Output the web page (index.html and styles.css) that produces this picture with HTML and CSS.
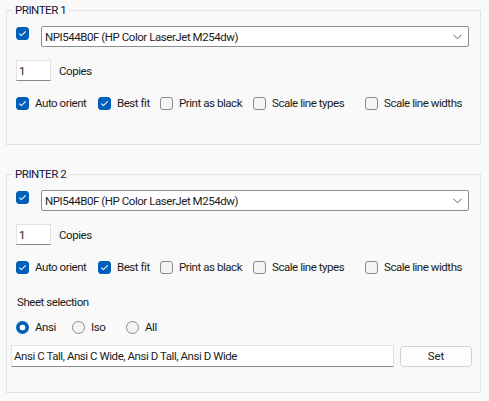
FILE: index.html
```html
<!DOCTYPE html>
<html>
<head>
<meta charset="utf-8">
<link rel="stylesheet" href="styles.css">
</head>
<body>
<div class="page">
  <fieldset class="group group-1">
    <legend>PRINTER 1</legend>
    <div class="inner">
      <div class="row printer-row">
        <span class="cb checked"><svg width="13" height="13" viewBox="0 0 13 13"><path d="M3.3 6.6 L5.4 8.6 L9.7 4.4" fill="none" stroke="#fff" stroke-width="1.1"/></svg></span>
        <div class="combo"><span>NPI544B0F (HP Color LaserJet M254dw)</span><svg class="chev" width="9" height="6" viewBox="0 0 9 6"><path d="M0.5 0.8 L4.5 4.8 L8.5 0.8" fill="none" stroke="#5d5d5d" stroke-width="1"/></svg></div>
      </div>
      <div class="row copies-row">
        <div class="textbox copies">1</div>
        <span class="lbl">Copies</span>
      </div>
      <div class="opts">
        <label class="opt"><span class="cb checked"><svg width="13" height="13" viewBox="0 0 13 13"><path d="M3.3 6.6 L5.4 8.6 L9.7 4.4" fill="none" stroke="#fff" stroke-width="1.1"/></svg></span>Auto orient</label>
        <label class="opt"><span class="cb checked"><svg width="13" height="13" viewBox="0 0 13 13"><path d="M3.3 6.6 L5.4 8.6 L9.7 4.4" fill="none" stroke="#fff" stroke-width="1.1"/></svg></span>Best fit</label>
        <label class="opt"><span class="cb"></span>Print as black</label>
        <label class="opt"><span class="cb"></span>Scale line types</label>
        <label class="opt"><span class="cb"></span>Scale line widths</label>
      </div>
    </div>
  </fieldset>

  <fieldset class="group group-2">
    <legend>PRINTER 2</legend>
    <div class="inner">
      <div class="row printer-row">
        <span class="cb checked"><svg width="13" height="13" viewBox="0 0 13 13"><path d="M3.3 6.6 L5.4 8.6 L9.7 4.4" fill="none" stroke="#fff" stroke-width="1.1"/></svg></span>
        <div class="combo"><span>NPI544B0F (HP Color LaserJet M254dw)</span><svg class="chev" width="9" height="6" viewBox="0 0 9 6"><path d="M0.5 0.8 L4.5 4.8 L8.5 0.8" fill="none" stroke="#5d5d5d" stroke-width="1"/></svg></div>
      </div>
      <div class="row copies-row">
        <div class="textbox copies">1</div>
        <span class="lbl">Copies</span>
      </div>
      <div class="opts">
        <label class="opt"><span class="cb checked"><svg width="13" height="13" viewBox="0 0 13 13"><path d="M3.3 6.6 L5.4 8.6 L9.7 4.4" fill="none" stroke="#fff" stroke-width="1.1"/></svg></span>Auto orient</label>
        <label class="opt"><span class="cb checked"><svg width="13" height="13" viewBox="0 0 13 13"><path d="M3.3 6.6 L5.4 8.6 L9.7 4.4" fill="none" stroke="#fff" stroke-width="1.1"/></svg></span>Best fit</label>
        <label class="opt"><span class="cb"></span>Print as black</label>
        <label class="opt"><span class="cb"></span>Scale line types</label>
        <label class="opt"><span class="cb"></span>Scale line widths</label>
      </div>
      <div class="sheet-title">Sheet selection</div>
      <div class="radios">
        <label class="ropt r-ansi"><span class="rb checked"></span>Ansi</label>
        <label class="ropt r-iso"><span class="rb"></span>Iso</label>
        <label class="ropt"><span class="rb"></span>All</label>
      </div>
      <div class="sheet-row">
        <div class="textbox sheets">Ansi C Tall, Ansi C Wide, Ansi D Tall, Ansi D Wide</div>
        <button class="btn">Set</button>
      </div>
    </div>
  </fieldset>
</div>
</body>
</html>
```

FILE: styles.css
```css
html, body {
  margin: 0;
  padding: 0;
  background: #f9f9f9;
}
body {
  font-family: Roboto, "Noto Sans", sans-serif;
  font-size: 11.5px;
  letter-spacing: -0.45px;
  color: #1b1b1b;
}
.page {
  padding: 2px 0 0 6px;
  width: 475px;
}
.group {
  margin: 0;
  padding: 0;
  border: 1px solid #e3e3e3;
  min-width: 0;
}
.group-2 {
  margin-top: 21px;
}
legend {
  margin-left: 5px;
  padding: 0 3px;
  line-height: 16px;
  color: #14143a;
}
.inner {
  padding: 8px 11px 33px 9px;
}
.group-2 .inner {
  padding-bottom: 25px;
}
.row {
  display: flex;
}
.printer-row {
  align-items: flex-start;
  gap: 12px;
}
.printer-row .cb {
  margin-top: 1px;
}
.cb {
  flex: none;
  width: 13px;
  height: 13px;
  box-sizing: border-box;
  border: 1px solid #8b8b8b;
  border-radius: 3px;
  background: #f4f4f4;
  display: block;
}
.cb.checked {
  background: #005fb8;
  border-color: #005fb8;
}
.cb svg {
  display: block;
  margin: -1px;
}
.combo {
  flex: 1;
  height: 21px;
  box-sizing: border-box;
  border: 1px solid #8d8d8d;
  border-radius: 2px;
  background: #fff;
  display: flex;
  align-items: center;
  padding: 0 5px 0 3px;
}
.combo span {
  flex: 1;
}
.chev {
  display: block;
  margin-right: 1px;
}
.copies-row {
  margin-top: 13px;
  align-items: center;
  gap: 8px;
}
.textbox {
  box-sizing: border-box;
  height: 21px;
  background: #fff;
  border: 1px solid #e2e2e2;
  border-bottom-color: #8a8a8a;
  display: flex;
  align-items: center;
  padding-left: 2px;
  white-space: nowrap;
}
.copies {
  width: 35px;
}
.opts {
  margin-top: 14px;
  display: grid;
  grid-template-columns: 82px 62px 93px 112px auto;
  line-height: 16px;
  white-space: nowrap;
}
.opt {
  display: flex;
  align-items: center;
  gap: 6px;
}
.sheet-title {
  margin-top: 19px;
  line-height: 16px;
  padding-left: 1px;
}
.radios {
  margin-top: 9px;
  display: flex;
  line-height: 16px;
}
.ropt {
  display: flex;
  align-items: center;
  gap: 6px;
}
.r-ansi { width: 56px; }
.r-iso { width: 54px; }
.rb {
  width: 13px;
  height: 13px;
  box-sizing: border-box;
  border-radius: 50%;
  border: 1px solid #8b8b8b;
  background: #f4f4f4;
  display: block;
}
.rb.checked {
  border: none;
  background: radial-gradient(circle, #fff 0 2.6px, #005fb8 3.2px);
}
.sheet-row {
  margin: 10px -4px 0 -5px;
  display: flex;
  align-items: center;
  gap: 6px;
}
.sheets {
  flex: none;
  width: 383px;
  height: 22px;
}
.btn {
  flex: none;
  width: 72px;
  height: 21px;
  box-sizing: border-box;
  border: 1px solid #d2d2d2;
  border-radius: 4px;
  background: #fdfdfd;
  font: inherit;
  color: #1b1b1b;
  padding: 0;
}
```
